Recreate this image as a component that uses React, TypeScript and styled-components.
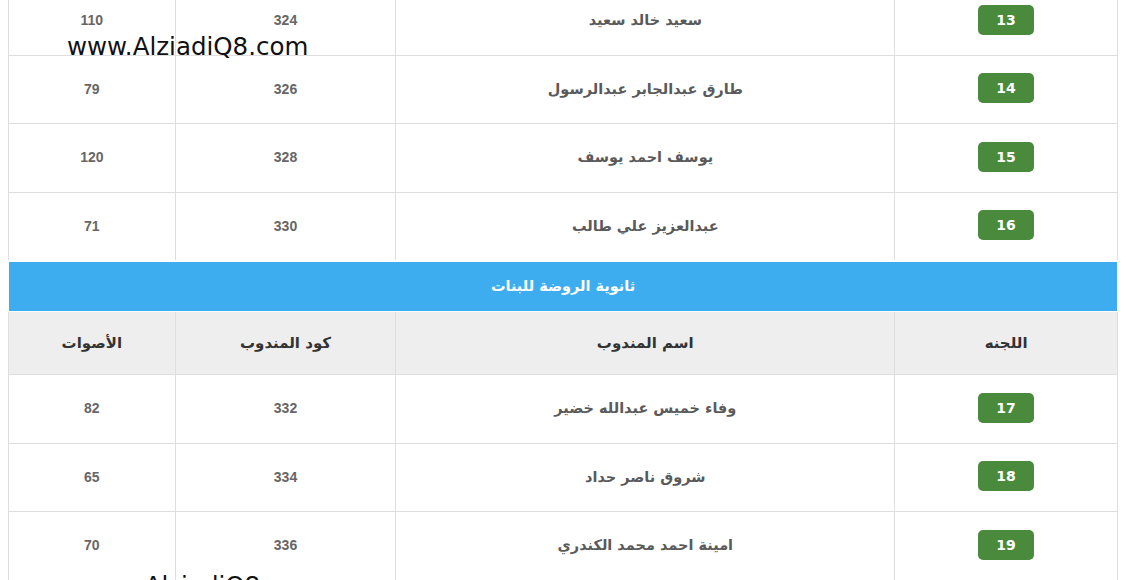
import styled, { createGlobalStyle } from 'styled-components'

// ─── Data ─────────────────────────────────────────────────────────────────────

interface Delegate {
  committee: number
  name: string
  code: number
  votes: number
}

const boysRows: Delegate[] = [
  { committee: 13, name: 'سعيد خالد سعيد', code: 324, votes: 110 },
  { committee: 14, name: 'طارق عبدالجابر عبدالرسول', code: 326, votes: 79 },
  { committee: 15, name: 'يوسف احمد يوسف', code: 328, votes: 120 },
  { committee: 16, name: 'عبدالعزيز علي طالب', code: 330, votes: 71 },
]

const girlsRows: Delegate[] = [
  { committee: 17, name: 'وفاء خميس عبدالله خضير', code: 332, votes: 82 },
  { committee: 18, name: 'شروق ناصر حداد', code: 334, votes: 65 },
  { committee: 19, name: 'امينة احمد محمد الكندري', code: 336, votes: 70 },
]

// column widths, right to left
const COLS = [222, 497, 220, 166]

// ─── Component ────────────────────────────────────────────────────────────────

function DelegateRow({ row }: { row: Delegate }) {
  return (
    <tr>
      <Cell>
        <Badge>{row.committee}</Badge>
      </Cell>
      <Cell>
        <Name>{row.name}</Name>
      </Cell>
      <Cell>
        <Num>{row.code}</Num>
      </Cell>
      <Cell>
        <Num>{row.votes}</Num>
      </Cell>
    </tr>
  )
}

export default function App() {
  return (
    <Page>
      <GlobalStyle />
      <Table dir="rtl">
        <colgroup>
          {COLS.map((w, i) => (
            <Col key={i} $width={w} />
          ))}
        </colgroup>
        <tbody>
          {boysRows.map((r) => (
            <DelegateRow key={r.committee} row={r} />
          ))}
          <tr>
            <SchoolCell colSpan={4}>ثانوية الروضة للبنات</SchoolCell>
          </tr>
          <tr>
            <HeadCell>اللجنه</HeadCell>
            <HeadCell>اسم المندوب</HeadCell>
            <HeadCell>كود المندوب</HeadCell>
            <HeadCell>الأصوات</HeadCell>
          </tr>
          {girlsRows.map((r) => (
            <DelegateRow key={r.committee} row={r} />
          ))}
        </tbody>
      </Table>
      <Watermark $top={32} $left={67}>www.AlziadiQ8.com</Watermark>
      <Watermark $top={571} $left={79}>www.AlziadiQ8.com</Watermark>
    </Page>
  )
}

// ─── Styles ───────────────────────────────────────────────────────────────────

const GlobalStyle = createGlobalStyle`
  html, body {
    margin: 0;
    padding: 0;
    background: #fff;
    overflow: hidden;
  }
`

const Page = styled.div`
  position: relative;
  width: 1126px;
  height: 580px;
  overflow: hidden;
  padding-left: 8px;
  box-sizing: border-box;
`

const Table = styled.table`
  width: 1110px;
  margin-top: -14px;
  border-collapse: collapse;
  table-layout: fixed;
  font-family: 'DejaVu Sans', 'Liberation Sans', sans-serif;
`

const Col = styled.col<{ $width: number }>`
  width: ${({ $width }) => $width}px;
`

const Cell = styled.td`
  height: 65.5px;
  padding: 0 0 2px;
  border: 1px solid #dedede;
  text-align: center;
  vertical-align: middle;
`

const Badge = styled.span`
  display: inline-flex;
  align-items: center;
  justify-content: center;
  width: 56px;
  height: 30px;
  border-radius: 5px;
  background: #4a8a3c;
  color: #fff;
  font-family: 'DejaVu Sans', sans-serif;
  font-weight: 700;
  font-size: 14px;
`

const Name = styled.span`
  color: #5a5a5a;
  font-weight: 700;
  font-size: 14.5px;
`

const Num = styled.span`
  color: #666;
  font-family: 'Liberation Sans', Arial, sans-serif;
  font-weight: 700;
  font-size: 14px;
`

const SchoolCell = styled.td`
  height: 47px;
  padding: 0 0 2px;
  border: 1px solid #fff;
  border-top-width: 2px;
  background: #3eadf0;
  color: #fff;
  font-weight: 700;
  font-size: 14.5px;
  text-align: center;
`

const HeadCell = styled.td`
  height: 62px;
  padding: 0;
  border: 1px solid #dedede;
  background: #eeeeee;
  color: #333;
  font-weight: 700;
  font-size: 15px;
  text-align: center;
`

const Watermark = styled.div<{ $top: number; $left: number }>`
  position: absolute;
  top: ${({ $top }) => $top}px;
  left: ${({ $left }) => $left}px;
  color: #111;
  font-family: 'DejaVu Sans', sans-serif;
  font-size: 24.5px;
  white-space: nowrap;
`
